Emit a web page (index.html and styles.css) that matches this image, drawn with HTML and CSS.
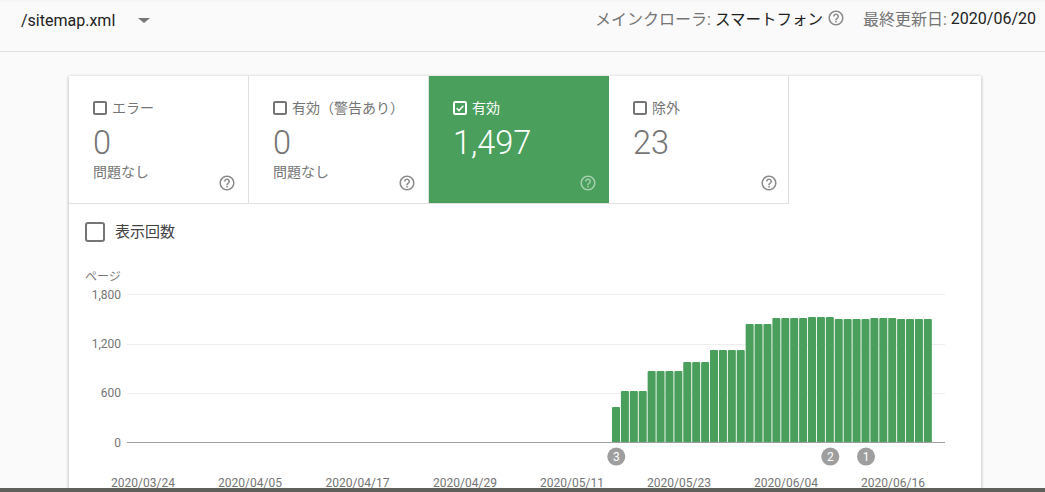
FILE: index.html
```html
<!doctype html>
<html>
  <head>
    <meta charset="utf-8">
    <meta name="viewport" content="width=device-width">
    <link rel="stylesheet" href="styles.css">
  </head>
  <body>
    <svg width="0" height="0" class="defs">
      <symbol id="help" viewBox="0 0 24 24">
        <path d="M11 18h2v-2h-2v2zm1-16C6.48 2 2 6.48 2 12s4.48 10 10 10 10-4.48 10-10S17.52 2 12 2zm0 18c-4.41 0-8-3.59-8-8s3.59-8 8-8 8 3.59 8 8-3.59 8-8 8zm0-14c-2.21 0-4 1.79-4 4h2c0-1.1.9-2 2-2s2 .9 2 2c0 2-3 1.75-3 5h2c0-2.25 3-2.5 3-5 0-2.21-1.79-4-4-4z"/>
      </symbol>
    </svg>
    <header class="topbar">
      <div class="picker">
        <span class="picker-name">/sitemap.xml</span>
        <span class="caret"></span>
      </div>
      <div class="meta">
        <span class="meta-item">メインクローラ: <b>スマートフォン</b><svg class="help meta-help"><use href="#help"/></svg></span>
        <span class="meta-item">最終更新日: <b class="meta-date">2020/06/20</b></span>
      </div>
    </header>
    <main class="card">
      <div class="tabs">
        <div class="tab">
          <div class="tab-label"><span class="check"></span>エラー</div>
          <div class="tab-value">0</div>
          <div class="tab-note">問題なし</div>
          <svg class="help tab-help"><use href="#help"/></svg>
        </div>
        <div class="tab">
          <div class="tab-label"><span class="check"></span>有効（警告あり）</div>
          <div class="tab-value">0</div>
          <div class="tab-note">問題なし</div>
          <svg class="help tab-help"><use href="#help"/></svg>
        </div>
        <div class="tab active">
          <div class="tab-label">
            <svg class="check checked" viewBox="2 2 10 10"><path d="M3.6 7.2l2.4 2.4 4.4-4.8"/></svg>有効
          </div>
          <div class="tab-value">1,497</div>
          <svg class="help tab-help"><use href="#help"/></svg>
        </div>
        <div class="tab">
          <div class="tab-label"><span class="check"></span>除外</div>
          <div class="tab-value">23</div>
          <svg class="help tab-help"><use href="#help"/></svg>
        </div>
      </div>
      <label class="toggle"><span class="toggle-box"></span>表示回数</label>
      <svg class="chart" width="912" height="228" viewBox="69 264 912 228">
        <text class="unit" x="85" y="281">ページ</text>

        <line class="grid" x1="127" x2="945" y1="294.5" y2="294.5"/>
        <line class="grid" x1="127" x2="945" y1="344.5" y2="344.5"/>
        <line class="grid" x1="127" x2="945" y1="393.5" y2="393.5"/>
        <text class="tick" x="121" y="298.5">1,800</text>
        <text class="tick" x="121" y="348">1,200</text>
        <text class="tick" x="121" y="397">600</text>
        <text class="tick" x="121" y="447">0</text>

        <g id="bars" class="bars"></g>
        <line class="axis" x1="127" x2="945" y1="442.5" y2="442.5"/>

        <g class="pin"><circle cx="616.3" cy="456.6" r="9"/><text x="616.3" y="461">3</text></g>
        <g class="pin"><circle cx="830.3" cy="456.6" r="9"/><text x="830.3" y="461">2</text></g>
        <g class="pin"><circle cx="866" cy="456.6" r="9"/><text x="866" y="461">1</text></g>

        <text class="date" x="143" y="486.5">2020/03/24</text>
        <text class="date" x="250" y="486.5">2020/04/05</text>
        <text class="date" x="357.5" y="486.5">2020/04/17</text>
        <text class="date" x="465" y="486.5">2020/04/29</text>
        <text class="date" x="572" y="486.5">2020/05/11</text>
        <text class="date" x="679" y="486.5">2020/05/23</text>
        <text class="date" x="786" y="486.5">2020/06/04</text>
        <text class="date" x="893" y="486.5">2020/06/16</text>
      </svg>
    </main>
    <div class="bottom-edge"></div>
    <script>
      // bar tops in page pixels, one per day, from the first day with data
      var tops = [407, 391, 391, 391, 371, 371, 371, 371, 362, 362, 362, 350, 350, 350, 350,
                  324, 324, 324, 318, 318, 318, 318, 317, 317, 317, 319, 319, 319, 319,
                  318, 318, 318, 319, 319, 319, 319];
      var bars = document.getElementById('bars');
      tops.forEach(function(top, i) {
        var rect = document.createElementNS('http://www.w3.org/2000/svg', 'rect');
        rect.setAttribute('x', 612 + i * 8.91);
        rect.setAttribute('y', top);
        rect.setAttribute('width', 8);
        rect.setAttribute('height', 443 - top);
        rect.setAttribute('rx', 1);
        bars.appendChild(rect);
      });
    </script>
  </body>
</html>
```

FILE: styles.css
```css
* {
  box-sizing: border-box;
}
html, body {
  height: 100%;
  margin: 0;
  overflow: hidden;
}
body {
  display: flex;
  flex-direction: column;
  font-family: Roboto, "Noto Sans CJK JP", sans-serif;
  color: #757575;
  background: #fafafa;
}
.defs {
  position: absolute;
}
.topbar {
  flex: none;
  display: flex;
  justify-content: space-between;
  height: 52px;
  padding: 10px 9px 0 21px;
  border-bottom: 1px solid #e0e0e0;
  background: linear-gradient(to bottom, #f3f3f3, #fafafa 3px);
}
.picker {
  display: flex;
  height: 20px;
  align-items: center;
  font-size: 16px;
  color: #212121;
}
.picker-name {
  width: 117px;
}
.caret {
  width: 0;
  height: 0;
  border-left: 6px solid transparent;
  border-right: 6px solid transparent;
  border-top: 5px solid #757575;
}
.meta {
  display: flex;
  height: 20px;
  margin-top: -2px;
  gap: 18px;
  align-items: center;
  font-size: 16px;
}
.meta-item {
  display: flex;
  align-items: center;
  white-space: pre;
}
.meta-item b {
  font-size: 15.5px;
  font-weight: 400;
  color: #212121;
}
.meta-item .meta-date {
  font-size: 16px;
}
.help {
  width: 18px;
  height: 18px;
  fill: #8a8a8a;
}
.meta-help {
  margin-left: 4px;
}
.card {
  flex: 1;
  display: flex;
  flex-direction: column;
  width: 912px;
  margin: 24px 0 0 69px;
  background: #fff;
  box-shadow: 0 1px 3px rgba(60, 64, 67, .3), 0 1px 4px rgba(60, 64, 67, .15);
}
.tabs {
  flex: none;
  display: flex;
  width: 720px;
  height: 128px;
  border-bottom: 1px solid #e0e0e0;
}
.tab {
  position: relative;
  width: 180px;
  padding: 22px 24px 0;
  border-right: 1px solid #e0e0e0;
}
.tab.active {
  color: #fff;
  background: #4a9f5c;
  border-right: 0;
}
.tab-label {
  display: flex;
  align-items: center;
  height: 18px;
  font-size: 14px;
}
.check {
  flex: none;
  width: 14px;
  height: 14px;
  margin: 2px 5px 0 0;
  border: 2px solid #757575;
  border-radius: 2px;
}
.check.checked {
  border-color: #fff;
  fill: none;
  stroke: #fff;
  stroke-width: 1.5;
}
.tab-value {
  height: 36px;
  margin-top: 9px;
  font-size: 32.5px;
  font-weight: 300;
  line-height: 36px;
}
.tab-note {
  margin-top: 1px;
  font-size: 14px;
  line-height: 20px;
}
.tab-help {
  position: absolute;
  right: 12px;
  bottom: 11px;
}
.tab:last-child .tab-help {
  right: 10px;
}
.tab.active .tab-help {
  fill: #a5cfae;
}
.toggle {
  display: flex;
  align-items: flex-start;
  height: 20px;
  margin: 18px 0 0 16px;
  font-size: 15px;
  line-height: 20px;
  color: #424242;
}
.toggle-box {
  width: 20px;
  height: 20px;
  margin-right: 10px;
  border: 2px solid #757575;
  border-radius: 3px;
}
.chart {
  flex: none;
  margin-top: 22px;
}
.unit {
  font-size: 12px;
  fill: #757575;
}
.tick {
  font-size: 12px;
  fill: #757575;
  text-anchor: end;
}
.date {
  font-size: 12px;
  fill: #757575;
  text-anchor: middle;
}
.grid {
  stroke: #eeeeee;
  stroke-width: 1;
}
.axis {
  stroke: #9e9e9e;
  stroke-width: 1;
}
.bars {
  fill: #4a9f5c;
}
.pin circle {
  fill: #9e9e9e;
}
.pin text {
  font-size: 12px;
  fill: #fff;
  text-anchor: middle;
}
.bottom-edge {
  position: absolute;
  left: 0;
  right: 0;
  bottom: 0;
  height: 4px;
  background: #5f5f5b;
}
```
